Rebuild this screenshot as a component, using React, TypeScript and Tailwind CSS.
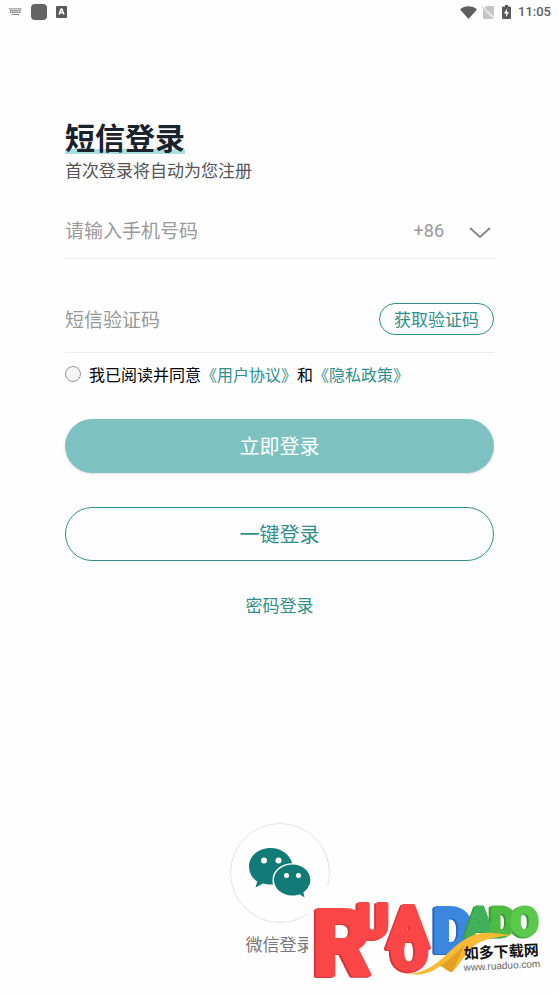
function StatusBar() {
  return (
    <header className="flex h-6 items-center justify-between px-2 text-[#5f5f5f]">
      <div className="flex items-center gap-2">
        <svg width="15" height="8" viewBox="0 0 15 8" fill="none" stroke="#777">
          <path d="M1 .8h13M2 2.6h11M2 4.4h11" strokeWidth="1.2" strokeDasharray="1.5 .6" />
          <path d="M4 6.4h7" strokeWidth="1" />
        </svg>
        <span className="size-4 rounded bg-[#646464]" />
        <svg width="11" height="12" viewBox="0 0 11 12" className="ml-px">
          <rect width="11" height="12" rx="1" fill="#5a5a5a" />
          <path d="M3 8.5 5.2 3h.6L8 8.5M3.8 6.8h3.4" fill="none" stroke="#fff" strokeWidth="1.4" />
        </svg>
      </div>
      <div className="flex items-center">
        <svg width="17" height="13" viewBox="0 0 17 13" className="mr-[5px]">
          <path d="M0 3.4C4.5-.8 12.5-.8 17 3.4L8.5 13z" fill="#5f5f5f" />
        </svg>
        <svg width="12" height="13" viewBox="0 0 12 13" className="mr-2">
          <path d="M4.5 0H11q1 0 1 1v9.500L2.500 1.800zM1 3l10 10H2q-1 0-1-1z" fill="#c4c4c4" />
          <path d="M0 .8 12 12.500" stroke="#b5b5b5" />
        </svg>
        <svg width="9" height="14" viewBox="0 0 9 14" className="mr-[7px]">
          <path d="M3 0h3v1.500h2q1 0 1 1V13q0 1-1 1H1q-1 0-1-1V2.500q0-1 1-1h2z" fill="#5a5a5a" />
          <path d="M5 3.500 2 8.500h2V12l3-5H5z" fill="#fff" />
        </svg>
        <span className="font-[Roboto] text-[13px] font-medium leading-6">11:05</span>
      </div>
    </header>
  )
}

function WechatIcon() {
  return (
    <svg width="62" height="50" viewBox="0 0 62 50" fill="#127b78">
      <path d="M21.500 0C9.600 0 0 8 0 18.500c0 6.300 3.200 11.500 8.200 15L6.500 39.500l7.500-4c2.700.8 5 1.100 8 1.100h2C21 24 31 15.200 43.300 15.200 40.500 6 32 0 21.500 0z" />
      <path d="M43.500 16.500C33 16.500 25 23.400 25 32s8 15.500 18.500 15.500c2.700 0 5-.4 7.300-1.200L55.500 49.500l-1.200-5.200c4.300-2.900 7-7.200 7-12.300 0-8.600-7.500-15.500-17.800-15.500z" />
      <g fill="#fff">
        <circle cx="15" cy="12.500" r="3" />
        <circle cx="29.500" cy="12.500" r="3" />
        <circle cx="37.500" cy="27.500" r="2.500" />
        <circle cx="49.500" cy="27.500" r="2.500" />
      </g>
    </svg>
  )
}

function Watermark() {
  return (
    <a href="http://www.ruaduo.com" aria-label="如多下载网" className="absolute right-0 bottom-0">
      <svg width="251" height="109" viewBox="308 886 251 109">
        <rect x="308" y="886" width="251" height="109" fill="#fefefe" />
        <g fontFamily="Roboto, sans-serif" fontWeight="900" strokeLinejoin="round">
          <g
            fill="#fb4648"
            stroke="#fb4648"
            strokeWidth="4"
            className="[filter:drop-shadow(-2px_1px_0_#d8353a)]"
          >
            <text x="313" y="975" fontSize="90">R</text>
            <text x="357" y="938" fontSize="48">U</text>
            <text x="388" y="948" fontSize="60">A</text>
            <text x="391" y="970" fontSize="54">O</text>
          </g>
          <text
            x="433"
            y="952"
            fontSize="62"
            fill="#3b87e0"
            stroke="#3b87e0"
            strokeWidth="4"
            className="[filter:drop-shadow(-2px_1px_0_#2866bd)]"
          >
            D
          </text>
          <g strokeWidth="3" className="[filter:drop-shadow(-2px_1px_0_#379a3a)]">
            <text x="466" y="936" fontSize="40" fill="#42b05a" stroke="#42b05a">A</text>
            <text x="490" y="936" fontSize="40" fill="#4dbb42" stroke="#4dbb42">D</text>
            <text x="511" y="936" fontSize="40" fill="#5cc94c" stroke="#5cc94c">O</text>
          </g>
        </g>
        <path
          d="M408 974c18-1 31-12 41-22 14-14 28-21 44-19 10 1 15 2 20 2-22 2-36 6-43 15-8 9-12 17-18 22-4 0-8-5-12-6-9 7-19 10-32 8z"
          fill="#f8b935"
        />
        <path d="M440 966c10-6 18-15 24-21-3 9-8 20-12 27-4 0-8-5-12-6z" fill="#e59f22" />
        <g transform="rotate(-3 465 957)">
          <text x="464" y="959" fontSize="15" fontWeight="700" fill="#111" fontFamily="'Noto Sans CJK SC', sans-serif">
            如多下载网
          </text>
          <text x="463" y="971" fontSize="10" fill="#666" fontFamily="'Liberation Sans', sans-serif">
            www.ruaduo.com
          </text>
        </g>
      </svg>
    </a>
  )
}

export default function App() {
  return (
    <div className="relative flex min-h-screen flex-col bg-[#fefefe] font-['Noto_Sans_CJK_SC',sans-serif]">
      <StatusBar />
      <main className="flex flex-1 flex-col px-[65px] pt-[94px]">
        <h1 className="self-start bg-linear-to-t from-[#a9dfe0] from-15% to-transparent to-15% text-[30px] leading-9 font-bold text-[#1a232c]">
          短信登录
        </h1>
        <p className="text-[17px] leading-8 text-[#555]">首次登录将自动为您注册</p>

        <form>
          <div className="mt-4 flex h-[57px] items-center border-b border-[#ececec]">
            <input
              type="tel"
              aria-label="手机号码"
              placeholder="请输入手机号码"
              className="min-w-0 flex-1 text-[19px] placeholder:text-[#999]"
            />
            <button type="button" className="flex items-center gap-6 pr-0.5 font-[Roboto] text-[18px] text-[#999]">
              +86
              <svg
                width="24"
                height="12"
                viewBox="0 0 24 12"
                fill="none"
                stroke="#888"
                strokeWidth="2"
                className="mt-1.5"
              >
                <path d="m2 1 10 9L22 1" />
              </svg>
            </button>
          </div>
          <div className="mt-7 flex h-[66px] items-center border-b border-[#ececec]">
            <input
              type="text"
              aria-label="短信验证码"
              placeholder="短信验证码"
              className="min-w-0 flex-1 text-[19px] placeholder:text-[#999]"
            />
            <button
              type="button"
              className="mb-0.5 h-8 rounded-full border border-[#2f8f8a] px-3.5 text-[17px] leading-7 text-[#2f8f8a]"
            >
              获取验证码
            </button>
          </div>

          <div className="mt-[7px] flex items-center gap-2 text-[16px] leading-7">
            <input
              id="agree"
              type="checkbox"
              className="size-4 appearance-none rounded-full border border-[#999] bg-[#f5f5f5] checked:bg-[#2f8f8a]"
            />
            <p>
              <label htmlFor="agree">我已阅读并同意</label>
              <a href="#terms" className="text-[#2f8f8a]">《用户协议》</a>
              和
              <a href="#privacy" className="text-[#2f8f8a]">《隐私政策》</a>
            </p>
          </div>

          <button
            type="submit"
            className="mt-[31px] h-[54px] w-full rounded-full bg-[#7dc2c1] text-[20px] text-white shadow-sm"
          >
            立即登录
          </button>
          <button
            type="button"
            className="mt-[34px] h-[54px] w-full rounded-full border border-[#2f8f8a] text-[20px] text-[#2f8f8a]"
          >
            一键登录
          </button>
        </form>
        <a href="#password" className="mt-7 self-center text-[17px] leading-8 text-[#2f8f8a]">
          密码登录
        </a>

        <button type="button" className="mt-auto mb-[35px] self-center text-[17px] leading-8 text-[#777]">
          <span className="mb-[5px] flex size-[100px] items-center justify-center rounded-full border border-[#e2e2e2]">
            <WechatIcon />
          </span>
          微信登录
        </button>
      </main>
      <Watermark />
    </div>
  )
}
